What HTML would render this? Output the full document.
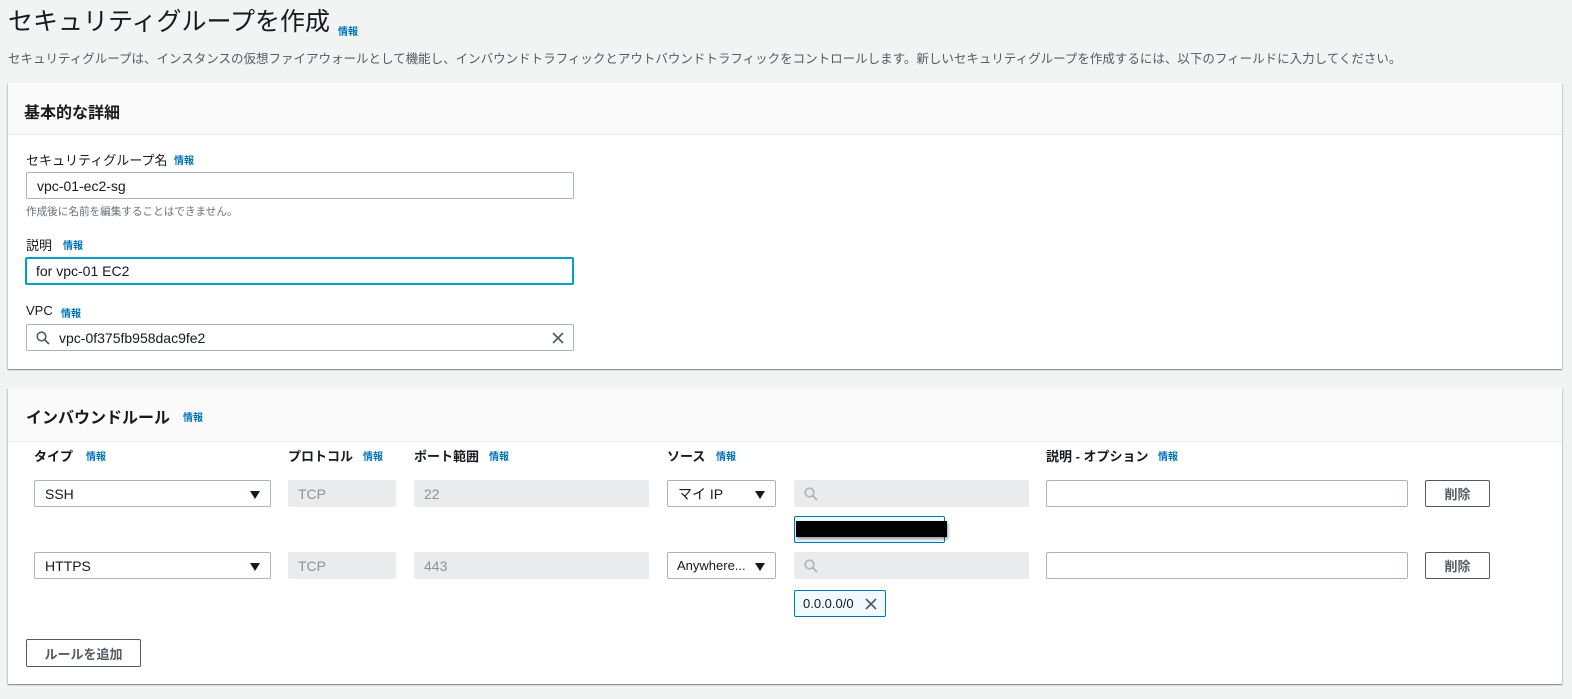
<!DOCTYPE html><html><head><meta charset="utf-8"><style>
*{box-sizing:border-box;margin:0;padding:0}
body{width:1572px;height:699px;background:#f2f3f3;font-family:"Liberation Sans","Noto Sans CJK JP",sans-serif;color:#16191f;position:relative;overflow:hidden}
.a{position:absolute}
.info{color:#0073bb;font-size:10px;font-weight:bold}
.panel{position:absolute;left:8px;width:1554px;background:#fff;box-shadow:0 1px 1px rgba(0,28,36,.3),1px 1px 1px rgba(0,28,36,.15),-1px 1px 1px rgba(0,28,36,.15)}
.ph{position:absolute;left:0;top:0;width:100%;background:#fafafa;border-bottom:1px solid #eaeded}
.inp{position:absolute;border:1px solid #aab7b8;border-radius:2px;background:#fff;font-size:14px;padding-left:10px;display:flex;align-items:center}
.dis{position:absolute;background:#e9ebed;border-radius:2px;font-size:14px;color:#879596;padding-left:10px;display:flex;align-items:center}
.lbl{position:absolute;font-size:13px}
.hl{position:absolute;font-size:13px;font-weight:bold}
.tri{position:absolute;right:10px;top:10px;width:0;height:0;border-left:5px solid transparent;border-right:5px solid transparent;border-top:8px solid #16191f}
.btn{position:absolute;border:1px solid #545b64;border-radius:2px;background:#fff;font-size:13px;font-weight:bold;color:#545b64;display:flex;align-items:center;justify-content:center}
.tok{position:absolute;border:1px solid #0073bb;background:#f1faff;border-radius:2px}
</style></head><body>
<div class="a" style="left:8px;top:5px;font-size:25px;line-height:34px">セキュリティグループを作成</div>
<div class="a info" style="left:338px;top:23px">情報</div>
<div class="a" style="left:8px;top:51px;font-size:12.5px;line-height:16px;color:#545b64;white-space:nowrap">セキュリティグループは、インスタンスの仮想ファイアウォールとして機能し、インバウンドトラフィックとアウトバウンドトラフィックをコントロールします。新しいセキュリティグループを作成するには、以下のフィールドに入力してください。</div>

<div class="panel" style="top:83px;height:286px">
<div class="ph" style="height:52px"><div class="a" style="left:16px;top:16px;font-size:16px;font-weight:bold">基本的な詳細</div></div>
</div>
<div class="lbl" style="left:26px;top:150px">セキュリティグループ名</div><div class="a info" style="left:174px;top:152px">情報</div>
<div class="inp" style="left:26px;top:172px;width:548px;height:27px">vpc-01-ec2-sg</div>
<div class="a" style="left:26px;top:204px;font-size:10.6px;color:#687078">作成後に名前を編集することはできません。</div>
<div class="lbl" style="left:26px;top:235px">説明</div><div class="a info" style="left:63px;top:237px">情報</div>
<div class="inp" style="left:25px;top:257px;width:549px;height:28px;border:2px solid #00a1c9;padding-left:9px">for vpc-01 EC2</div>
<div class="lbl" style="left:26px;top:303px">VPC</div><div class="a info" style="left:61px;top:305px">情報</div>
<div class="inp" style="left:26px;top:324px;width:548px;height:27px;padding-left:32px">vpc-0f375fb958dac9fe2
<svg class="a" style="left:9px;top:6px" width="14" height="14" viewBox="0 0 14 14"><circle cx="5.5" cy="5.5" r="4.3" fill="none" stroke="#545b64" stroke-width="1.6"/><path d="M8.7 8.7L13 13" stroke="#545b64" stroke-width="1.8"/></svg>
<svg class="a" style="right:9px;top:7px" width="12" height="12" viewBox="0 0 12 12"><path d="M1 1L11 11M11 1L1 11" stroke="#545b64" stroke-width="1.7"/></svg></div>

<div class="panel" style="top:388px;height:296px">
<div class="ph" style="height:54px"><div class="a" style="left:18px;top:16px;font-size:16px;font-weight:bold">インバウンドルール</div><div class="a info" style="left:175px;top:21px">情報</div></div>
</div>
<div class="hl" style="left:34px;top:446px">タイプ</div><div class="a info" style="left:86px;top:448px">情報</div>
<div class="hl" style="left:288px;top:446px">プロトコル</div><div class="a info" style="left:363px;top:448px">情報</div>
<div class="hl" style="left:414px;top:446px">ポート範囲</div><div class="a info" style="left:489px;top:448px">情報</div>
<div class="hl" style="left:667px;top:446px">ソース</div><div class="a info" style="left:716px;top:448px">情報</div>
<div class="hl" style="left:1046px;top:446px">説明 - オプション</div><div class="a info" style="left:1158px;top:448px">情報</div>

<div class="inp" style="left:34px;top:480px;width:237px;height:27px">SSH<div class="tri"></div></div>
<div class="dis" style="left:288px;top:480px;width:108px;height:27px">TCP</div>
<div class="dis" style="left:414px;top:480px;width:235px;height:27px">22</div>
<div class="inp" style="left:667px;top:480px;width:109px;height:27px">マイ IP<div class="tri"></div></div>
<div class="dis" style="left:794px;top:480px;width:235px;height:27px"><svg width="14" height="14" viewBox="0 0 14 14"><circle cx="5.5" cy="5.5" r="4.3" fill="none" stroke="#aab7b8" stroke-width="1.6"/><path d="M8.7 8.7L13 13" stroke="#aab7b8" stroke-width="1.8"/></svg></div>
<div class="inp" style="left:1046px;top:480px;width:362px;height:27px"></div>
<div class="btn" style="left:1425px;top:480px;width:65px;height:27px">削除</div>
<div class="tok" style="left:794px;top:516px;width:151px;height:27px"><div class="a" style="left:1px;top:4px;width:151px;height:16px;background:#000;box-shadow:1px 2px 3px rgba(0,0,0,.4)"></div></div>

<div class="inp" style="left:34px;top:552px;width:237px;height:27px">HTTPS<div class="tri"></div></div>
<div class="dis" style="left:288px;top:552px;width:108px;height:27px">TCP</div>
<div class="dis" style="left:414px;top:552px;width:235px;height:27px">443</div>
<div class="inp" style="left:667px;top:552px;width:109px;height:27px;font-size:13px;padding-left:9px">Anywhere...<div class="tri"></div></div>
<div class="dis" style="left:794px;top:552px;width:235px;height:27px"><svg width="14" height="14" viewBox="0 0 14 14"><circle cx="5.5" cy="5.5" r="4.3" fill="none" stroke="#aab7b8" stroke-width="1.6"/><path d="M8.7 8.7L13 13" stroke="#aab7b8" stroke-width="1.8"/></svg></div>
<div class="inp" style="left:1046px;top:552px;width:362px;height:27px"></div>
<div class="btn" style="left:1425px;top:552px;width:65px;height:27px">削除</div>
<div class="tok" style="left:794px;top:590px;width:92px;height:27px;font-size:13px;padding:5px 0 0 8px">0.0.0.0/0<svg class="a" style="left:70px;top:7px" width="12" height="12" viewBox="0 0 12 12"><path d="M1 1L11 11M11 1L1 11" stroke="#545b64" stroke-width="1.7"/></svg></div>

<div class="btn" style="left:26px;top:639px;width:115px;height:28px">ルールを追加</div>
</body></html>
